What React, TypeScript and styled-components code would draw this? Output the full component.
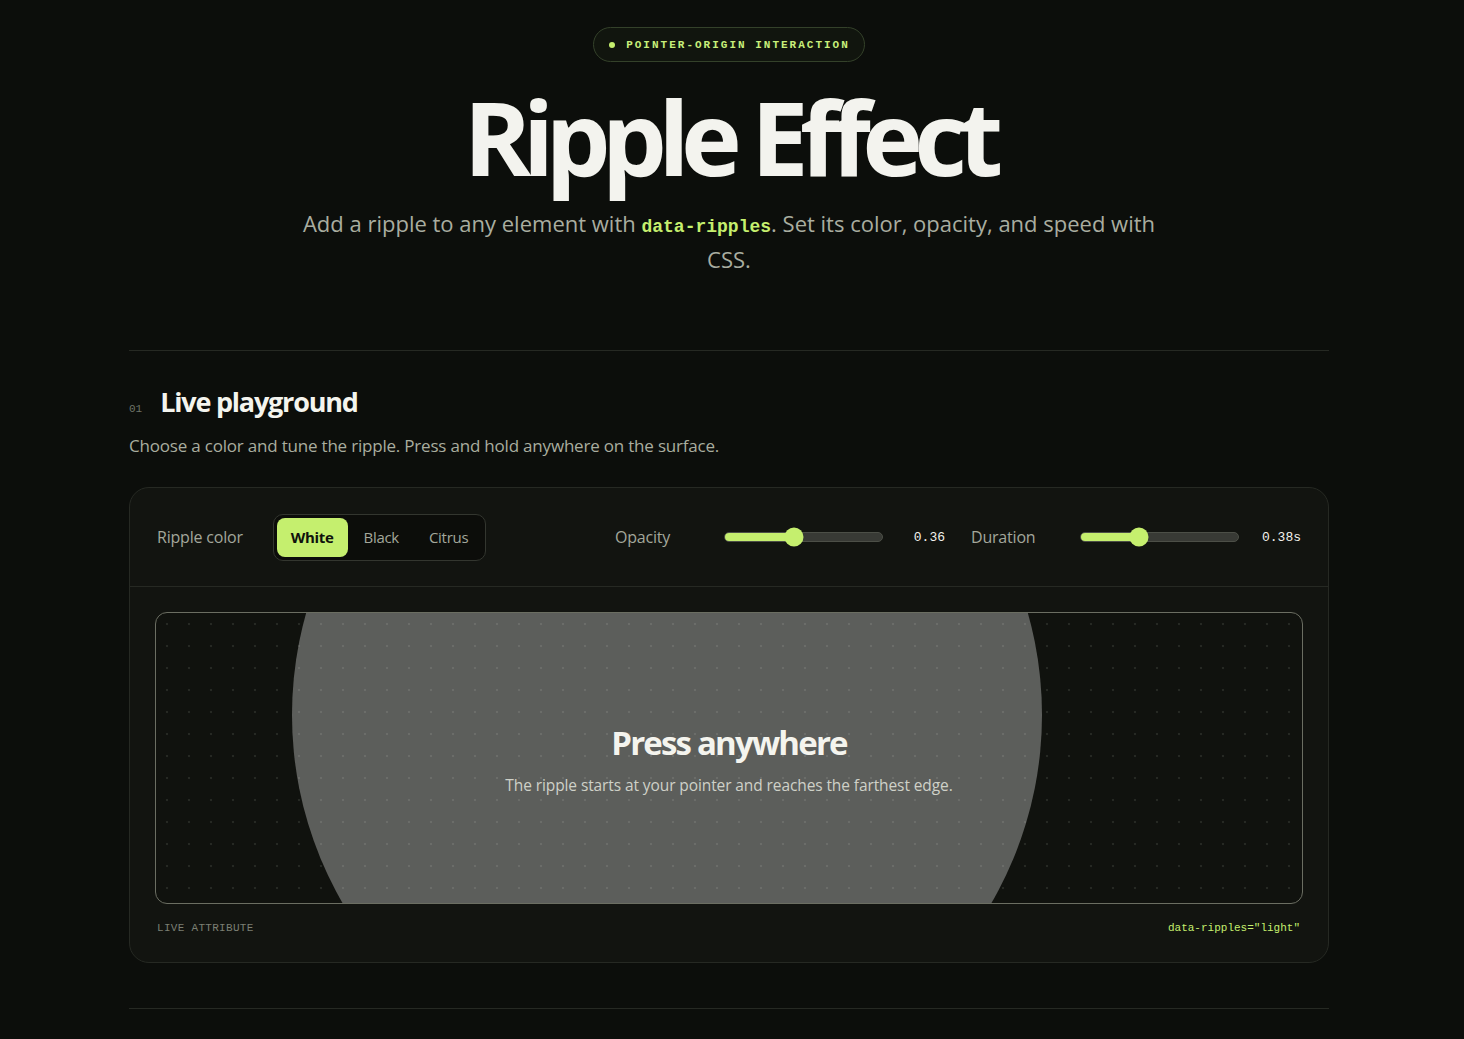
import styled, { createGlobalStyle } from 'styled-components';

const sans = `"Open Sans", "Noto Sans", sans-serif`;
const mono = `"Liberation Mono", "DejaVu Sans Mono", monospace`;
const citrus = '#c5ef6e';

const GlobalStyle = createGlobalStyle`
  * { box-sizing: border-box; }
  html, body {
    margin: 0;
    background: #0c0e0b;
    color: #f2f2ec;
    font-family: ${sans};
  }
`;

type SliderProps = {
  label: string;
  value: number;
  display: string;
};

const Slider = ({ label, value, display }: SliderProps) => {
  return (
    <SliderGroup>
      <ControlLabel>{label}</ControlLabel>
      <Track>
        <Fill style={{ width: `${value * 100}%` }} />
        <Thumb style={{ left: `${value * 100}%` }} />
      </Track>
      <Value>{display}</Value>
    </SliderGroup>
  );
};

const App = () => {
  const colors = ['White', 'Black', 'Citrus'];
  return (
    <Shell>
      <GlobalStyle />
      <Page>
        <Hero>
          <Badge>
            <BadgeDot />
            POINTER-ORIGIN INTERACTION
          </Badge>
          <Title>Ripple Effect</Title>
          <Lead>
            Add a ripple to any element with <Code>data-ripples</Code>. Set its color, opacity, and speed with CSS.
          </Lead>
        </Hero>

        <Divider />

        <Section>
          <SectionHead>
            <SectionNum>01</SectionNum>
            <SectionTitle>Live playground</SectionTitle>
          </SectionHead>
          <SectionText>Choose a color and tune the ripple. Press and hold anywhere on the surface.</SectionText>

          <Card>
            <Controls>
              <ColorGroup>
                <ControlLabel>Ripple color</ControlLabel>
                <Segments>
                  {colors.map((c) => (
                    <Segment key={c} $active={c === 'White'}>
                      {c}
                    </Segment>
                  ))}
                </Segments>
              </ColorGroup>
              <Sliders>
                <Slider label="Opacity" value={0.44} display="0.36" />
                <Slider label="Duration" value={0.37} display="0.38s" />
              </Sliders>
            </Controls>

            <SurfaceWrap>
              <Surface>
                <Ripple />
                <SurfaceText>
                  <SurfaceTitle>Press anywhere</SurfaceTitle>
                  <SurfaceSub>The ripple starts at your pointer and reaches the farthest edge.</SurfaceSub>
                </SurfaceText>
              </Surface>
            </SurfaceWrap>

            <CardFooter>
              <FooterLabel>LIVE ATTRIBUTE</FooterLabel>
              <FooterCode>data-ripples="light"</FooterCode>
            </CardFooter>
          </Card>
        </Section>

        <Divider />
      </Page>
    </Shell>
  );
};

const Shell = styled.div`
  padding-right: 6px;
`;

const Page = styled.div`
  max-width: 1200px;
  margin: 0 auto;
  padding: 27px 0 30px;
`;

const Hero = styled.header`
  display: flex;
  flex-direction: column;
  align-items: center;
  text-align: center;
  padding-bottom: 73px;
`;

const Badge = styled.div`
  display: inline-flex;
  align-items: center;
  gap: 11px;
  height: 35px;
  padding: 0 14px 0 15px;
  border-radius: 999px;
  border: 1px solid #34412a;
  background: #11150e;
  color: #c8ef7a;
  font-family: ${mono};
  font-weight: 700;
  font-size: 11px;
  letter-spacing: 2px;
`;

const BadgeDot = styled.span`
  width: 6px;
  height: 6px;
  border-radius: 50%;
  background: ${citrus};
`;

const Title = styled.h1`
  margin: 18px 0 0;
  font-size: 103px;
  line-height: 1.1;
  font-weight: 700;
  letter-spacing: -0.085em;
  color: #f3f3ee;
`;

const Lead = styled.p`
  margin: 12px 0 0;
  max-width: 860px;
  font-size: 22px;
  line-height: 36px;
  color: #a9ada0;
`;

const Code = styled.code`
  font-family: ${mono};
  font-weight: 700;
  font-size: 18px;
  line-height: 1;
  color: ${citrus};
`;

const Divider = styled.hr`
  margin: 0;
  border: 0;
  border-top: 1px solid #262923;
`;

const Section = styled.section`
  padding: 32px 0 45px;
`;

const SectionHead = styled.div`
  display: flex;
  align-items: baseline;
  gap: 18px;
`;

const SectionNum = styled.span`
  font-family: ${mono};
  font-size: 11px;
  color: #6f7468;
`;

const SectionTitle = styled.h2`
  margin: 0;
  font-size: 27px;
  font-weight: 700;
  letter-spacing: -0.045em;
  color: #f4f4ee;
`;

const SectionText = styled.p`
  margin: 14px 0 0;
  font-size: 17px;
  letter-spacing: -0.2px;
  color: #a9ad9f;
`;

const Card = styled.div`
  margin-top: 30px;
  border: 1px solid #262923;
  border-radius: 20px;
  background: #121410;
`;

const Controls = styled.div`
  display: flex;
  align-items: center;
  justify-content: space-between;
  height: 99px;
  padding: 0 27px;
  border-bottom: 1px solid #262923;
`;

const ColorGroup = styled.div`
  display: flex;
  align-items: center;
  gap: 30px;
`;

const ControlLabel = styled.span`
  font-size: 16px;
  letter-spacing: -0.2px;
  color: #a3a79b;
`;

const Segments = styled.div`
  display: flex;
  gap: 2px;
  padding: 3px;
  border: 1px solid #33362f;
  border-radius: 10px;
  background: #0c0d0a;
`;

const Segment = styled.button<{ $active?: boolean }>`
  height: 39px;
  padding: 0 14px;
  border: 0;
  border-radius: 8px;
  font-family: ${sans};
  font-size: 15px;
  letter-spacing: -0.3px;
  font-weight: ${(p) => (p.$active ? 700 : 400)};
  background: ${(p) => (p.$active ? citrus : 'transparent')};
  color: ${(p) => (p.$active ? '#10120c' : '#a3a79b')};
`;

const Sliders = styled.div`
  display: flex;
  align-items: center;
  gap: 26px;
`;

const SliderGroup = styled.div`
  display: grid;
  grid-template-columns: 91px 159px 44px;
  align-items: center;
  gap: 18px;
`;

const Track = styled.div`
  position: relative;
  height: 10px;
  border-radius: 99px;
  background: #383a35;
  border: 1px solid #4c4f47;
`;

const Fill = styled.div`
  height: 100%;
  border-radius: 99px;
  background: ${citrus};
`;

const Thumb = styled.div`
  position: absolute;
  top: 50%;
  width: 19px;
  height: 19px;
  border-radius: 50%;
  background: ${citrus};
  transform: translate(-50%, -50%);
`;

const Value = styled.span`
  text-align: right;
  font-family: ${mono};
  font-size: 13px;
  color: #f2f2ec;
`;

const SurfaceWrap = styled.div`
  padding: 25px 25px 0;
`;

const Surface = styled.div`
  position: relative;
  height: 292px;
  overflow: hidden;
  display: flex;
  align-items: center;
  justify-content: center;
  border: 1px solid #6b6e62;
  border-radius: 12px;
  background-color: #10120e;
  background-image: radial-gradient(circle, #262923 1px, transparent 1.6px);
  background-size: 22px 22px;
`;

const Ripple = styled.div`
  position: absolute;
  left: 136px;
  top: -273px;
  width: 750px;
  height: 750px;
  border-radius: 50%;
  background: rgba(255, 255, 255, 0.32);
`;

const SurfaceText = styled.div`
  position: relative;
  text-align: center;
`;

const SurfaceTitle = styled.div`
  font-size: 33px;
  font-weight: 700;
  letter-spacing: -0.055em;
  color: #f4f4ee;
`;

const SurfaceSub = styled.div`
  margin-top: 9px;
  font-size: 15.5px;
  letter-spacing: -0.1px;
  color: #cfd1c8;
`;

const CardFooter = styled.div`
  display: flex;
  justify-content: space-between;
  align-items: center;
  padding: 18px 28px 28px 27px;
`;

const FooterLabel = styled.span`
  font-family: ${mono};
  font-size: 11px;
  letter-spacing: 0.3px;
  color: #7b7f73;
`;

const FooterCode = styled.span`
  font-family: ${mono};
  font-size: 11px;
  color: ${citrus};
`;

export default App;
